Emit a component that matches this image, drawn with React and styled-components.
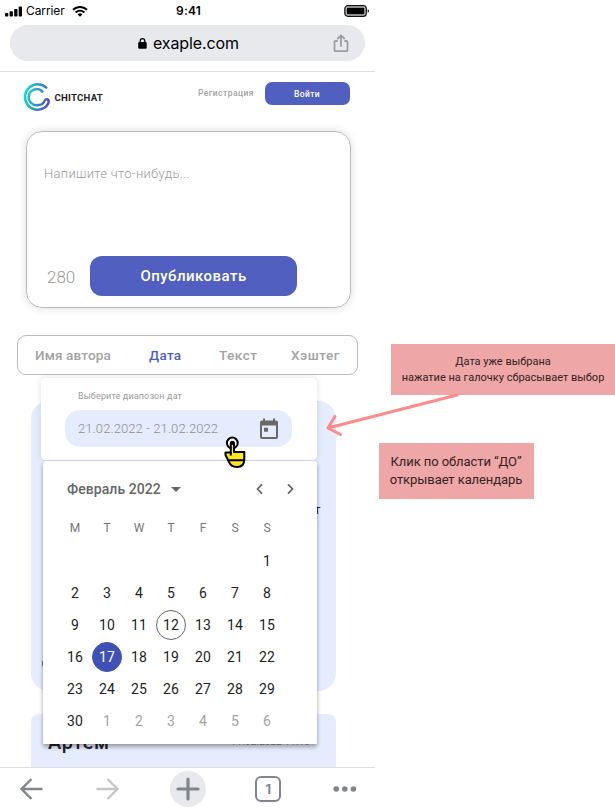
import React from 'react';
import styled, { createGlobalStyle } from 'styled-components';

const Global = createGlobalStyle`
  * { box-sizing: border-box; }
  body { margin: 0; background: #fff; font-family: Roboto, "Noto Sans", sans-serif; }
  button { border: 0; padding: 0; font: inherit; background: none; }
`;

const Page = styled.div`
  position: relative;
  width: 615px;
  height: 812px;
  display: flex;
  align-items: flex-start;
  overflow: hidden;
`;
const Phone = styled.main`
  width: 375px;
  height: 812px;
  flex: none;
  display: flex;
  flex-direction: column;
  overflow: hidden;
`;
const StatusBar = styled.div`
  height: 25px;
  padding: 0 5px 3px;
  display: grid;
  grid-template-columns: 1fr auto 1fr;
  align-items: center;
  color: #000;
`;
const StatusLeft = styled.div`
  display: flex;
  align-items: center;
  svg:last-child { margin-left: 7px; }
`;
const Carrier = styled.span`
  margin-left: 4px;
  font: 400 12px/20px Inter, sans-serif;
  letter-spacing: -0.1px;
`;
const Time = styled.span`
  margin-left: 2px;
  font: 600 12px/20px Inter, sans-serif;
  letter-spacing: 0.2px;
`;
const Battery = styled.svg`
  justify-self: end;
`;
const AddressBar = styled.div`
  position: relative;
  height: 36px;
  margin: 0 10px;
  border-radius: 18px;
  background: #e8e9ed;
  display: flex;
  align-items: center;
  justify-content: center;
  gap: 6px;
  padding-left: 2px;
  font: 400 16px/36px Inter, sans-serif;
  letter-spacing: -0.1px;
  color: #000;
`;
const ShareIcon = styled.svg`
  position: absolute;
  right: 16px;
  top: 9px;
`;
const Header = styled.header`
  height: 60px;
  margin-top: 10px;
  padding: 10px 25.5px 0 23px;
  border-top: 1px solid #dfe0e3;
  display: flex;
  align-items: flex-start;
`;
const Brand = styled.div`
  display: flex;
  align-items: center;
  gap: 3.5px;
  height: 30px;
  font-weight: 700;
  font-size: 9.6px;
  letter-spacing: 0.25px;
  color: #232323;
`;
const SignUp = styled.a`
  margin-left: auto;
  font-size: 8.5px;
  font-weight: 500;
  letter-spacing: 0.46px;
  line-height: 23px;
  color: #a3a3a3;
`;
const SignIn = styled.button`
  width: 85px;
  height: 23px;
  margin-left: 10.5px;
  border-radius: 7px;
  background: #505fc0;
  color: #fff;
  font-size: 8.5px;
  font-weight: 500;
  letter-spacing: 0.4px;
`;
const Composer = styled.section`
  flex: none;
  width: 325px;
  height: 177px;
  margin-left: 26px;
  padding: 32px 17px 11px;
  border: 1px solid #bcbcbc;
  border-radius: 16px;
  box-shadow: 0 0 10px rgba(0, 0, 0, 0.14);
  display: flex;
  flex-direction: column;
  justify-content: space-between;
`;
const Placeholder = styled.p`
  margin: 0;
  font-size: 13px;
  font-weight: 300;
  line-height: 20px;
  letter-spacing: 0.31px;
  color: #999;
`;
const ComposerFooter = styled.div`
  display: flex;
  align-items: center;
`;
const Counter = styled.span`
  width: 46px;
  padding: 2px 0 0 3px;
  font-size: 17px;
  font-weight: 300;
  color: #999;
`;
const Publish = styled.button`
  width: 207px;
  height: 40px;
  border-radius: 12px;
  background: #505fc0;
  color: #fff;
  font-size: 15px;
  font-weight: 500;
  letter-spacing: 0.47px;
`;
const Tabs = styled.nav`
  flex: none;
  width: 341px;
  height: 40px;
  margin: 27px 0 0 17px;
  padding: 0 17px;
  border: 1px solid #bcbcbc;
  border-radius: 9px;
  display: grid;
  grid-template-columns: 114px 70px 72px auto;
  align-items: center;
`;
const Tab = styled.span`
  font-size: 13.5px;
  font-weight: 500;
  letter-spacing: ${p => p.$spacing}px;
  color: ${p => (p.$active ? '#505fc0' : '#a3a3a3')};
`;
const Feed = styled.section`
  position: relative;
  flex: 1;
  min-height: 0;
  padding: 26px 39px 0 31px;
  display: flex;
  flex-direction: column;
  gap: 23px;
`;
const Post = styled.article`
  flex: none;
  height: ${p => p.$height}px;
  padding: ${p => p.$padding};
  border-radius: ${p => p.$radius};
  background: #e5ecfd;
  overflow: hidden;
  display: flex;
  justify-content: space-between;
`;
const PostText = styled.p`
  margin: 0 0 0 auto;
  font-size: 13.5px;
  line-height: 20px;
  color: #232323;
`;
const PostAction = styled.svg`
  align-self: flex-end;
`;
const Author = styled.strong`
  font-size: 20px;
  font-weight: 500;
  line-height: 24px;
  letter-spacing: 0.6px;
  color: #232323;
`;
const PostDate = styled.span`
  font-size: 10px;
  line-height: 24px;
  letter-spacing: 0.1px;
  color: #8b8f99;
`;
const RangePanel = styled.div`
  position: absolute;
  z-index: 1;
  left: 40.5px;
  top: 3px;
  width: 276.5px;
  height: 82px;
  padding: 12px 24.5px;
  border-radius: 5px;
  background: #fff;
  box-shadow: 0 0 6px rgba(0, 0, 0, 0.13);
`;
const RangeLabel = styled.div`
  margin: 0 0 7px 13px;
  font-size: 9px;
  line-height: 13px;
  letter-spacing: 0.14px;
  color: #9a9a9a;
`;
const RangeField = styled.div`
  height: 37px;
  width: 227px;
  padding: 0 13px;
  border-radius: 15px;
  background: #e5ecfd;
  display: flex;
  align-items: center;
  justify-content: space-between;
  font-size: 13px;
  font-weight: 300;
  letter-spacing: 0.1px;
  color: #8f8f94;
`;
const Calendar = styled.div`
  position: absolute;
  z-index: 2;
  left: 43px;
  top: 86px;
  width: 274px;
  height: 283px;
  padding: 12px 34px 0 16px;
  border-radius: 3px 3px 0 0;
  background: #fff;
  box-shadow: 0 3px 4px rgba(0, 0, 0, 0.32), 0 0 3px rgba(0, 0, 0, 0.1);
`;
const MonthBar = styled.div`
  height: 32px;
  padding-left: 8px;
  margin-right: -14px;
  display: flex;
  align-items: center;
  font-size: 14px;
  font-weight: 500;
  letter-spacing: 0.06px;
  color: #666;
  svg:nth-of-type(1) { margin-left: 10px; }
  svg:nth-of-type(2) { margin-left: auto; margin-right: 22px; }
  svg:nth-of-type(3) { margin-right: 3px; }
`;
const WeekRow = styled.div`
  display: grid;
  grid-template-columns: repeat(7, 32px);
  height: 32px;
  margin: 7px 0 1px;
  align-items: center;
  justify-items: center;
  font-size: 12px;
  color: #777;
`;
const DayGrid = styled.div`
  display: grid;
  grid-template-columns: repeat(7, 32px);
  grid-auto-rows: 32px;
  place-items: center;
`;
const Day = styled.span`
  width: 30px;
  height: 30px;
  display: grid;
  place-items: center;
  border-radius: 50%;
  border: 1px solid ${p => (p.$kind === 'today' ? '#666' : p.$kind === 'selected' ? '#3f51b5' : 'transparent')};
  background: ${p => (p.$kind === 'selected' ? '#3f51b5' : 'transparent')};
  color: ${p => ({ selected: '#fff', outside: '#a3a3a3' }[p.$kind] || '#232323')};
  font-size: 14px;
  letter-spacing: 0.2px;
  &:first-child { grid-column-start: 7; }
`;
const BottomBar = styled.footer`
  flex: none;
  height: 45px;
  padding: 0 17px 2px 18px;
  border-top: 1px solid #dfe0e3;
  background: #fff;
  display: flex;
  align-items: center;
  justify-content: space-between;
`;
const NavItem = styled.span`
  width: 26px;
  height: 36px;
  display: grid;
  place-items: center;
`;
const NewTab = styled.span`
  width: 36px;
  height: 36px;
  border-radius: 50%;
  background: #e8e9ed;
  display: grid;
  place-items: center;
`;
const TabCount = styled.span`
  width: 26px;
  height: 26px;
  margin-right: 1px;
  border: 2.6px solid #80868b;
  border-radius: 6px;
  display: grid;
  place-items: center;
  font: 700 13px/1 Inter, sans-serif;
  color: #80868b;
`;
const Notes = styled.aside`
  width: 240px;
  padding-top: 344px;
  display: flex;
  flex-direction: column;
  align-items: flex-start;
  gap: 48px;
`;
const Note = styled.div`
  width: ${p => p.$width}px;
  height: ${p => p.$height}px;
  margin-left: ${p => p.$left}px;
  padding-right: ${p => p.$inset}px;
  display: flex;
  flex-direction: column;
  align-items: center;
  justify-content: center;
  background: #eea6a6;
  color: #322424;
  font-size: ${p => p.$size}px;
  line-height: ${p => p.$line}px;
  letter-spacing: ${p => p.$spacing}px;
  white-space: nowrap;
`;
const Overlay = styled.svg`
  position: absolute;
  z-index: 3;
  left: ${p => p.$left}px;
  top: ${p => p.$top}px;
`;

const Logo = () => (
  <svg width="28" height="30" viewBox="0 0 28 30" fill="none" stroke="url(#brand)" strokeWidth="2.5" strokeLinecap="round">
    <defs>
      <linearGradient id="brand" x1="1" y1="12" x2="26" y2="19" gradientUnits="userSpaceOnUse">
        <stop stopColor="#0be0cc" />
        <stop offset="1" stopColor="#4d50c0" />
      </linearGradient>
    </defs>
    <path d="M23.2 5.6A12.7 12.7 0 1 0 21.4 25.8C24.4 23.5 25.7 20.8 25.7 19.2C25.7 16.6 22.1 16.4 21.4 19C20.6 21.6 18 23 15.2 23A8 8 0 1 1 19.3 9.5" />
  </svg>
);

const days = [...Array.from({ length: 30 }, (_, i) => i + 1), 1, 2, 3, 4, 5, 6];
const kindOf = (d, i) => (i >= 30 ? 'outside' : d === 12 ? 'today' : d === 17 ? 'selected' : 'plain');

export default function App() {
  return (
    <Page>
      <Global />
      <Phone>
        <StatusBar>
          <StatusLeft>
            <svg width="17" height="11" viewBox="0 0 17 11">
              <rect x="0" y="7" width="3.3" height="3.6" rx=".8" />
              <rect x="4.6" y="5.3" width="3.3" height="5.3" rx=".8" />
              <rect x="9.2" y="3" width="3.3" height="7.6" rx=".8" />
              <rect x="13.7" y="0.6" width="3.3" height="10" rx=".8" />
            </svg>
            <Carrier>Carrier</Carrier>
            <svg width="16" height="11" viewBox="0 0 16 11" fill="none" stroke="#000" strokeWidth="1.9">
              <path d="M1 3.8A10 10 0 0 1 15 3.8M3.6 6.5A6.2 6.2 0 0 1 12.4 6.5" />
              <path d="M8 10.8L5.6 8.4A3.4 3.4 0 0 1 10.4 8.4Z" fill="#000" stroke="none" />
            </svg>
          </StatusLeft>
          <Time>9:41</Time>
          <Battery width="26" height="12" viewBox="0 0 26 12">
            <rect x=".8" y=".7" width="21.5" height="10.6" rx="3" fill="#bbb" stroke="#111" strokeWidth="1.2" />
            <rect x="2.8" y="2.7" width="17.5" height="6.6" rx="1.2" />
            <path d="M23.7 4.2C25.4 4.8 25.4 7.2 23.7 7.8Z" />
          </Battery>
        </StatusBar>
        <AddressBar>
          <svg width="9" height="11" viewBox="0 0 9 11">
            <rect x="0.2" y="4.1" width="8.5" height="6.6" rx="1.2" />
            <path d="M2.2 5V3A2.3 2.3 0 0 1 6.8 3V5" fill="none" stroke="#000" strokeWidth="1.3" />
          </svg>
          exaple.com
          <ShareIcon width="16" height="19" viewBox="0 0 16 19" fill="none" stroke="#9b9da2" strokeWidth="1.8" strokeLinecap="round" strokeLinejoin="round">
            <path d="M4 7H2.5Q1.5 7 1.5 8V16.2Q1.5 17.2 2.5 17.2H13.5Q14.5 17.2 14.5 16.2V8Q14.5 7 13.5 7H12M8 12V1.5M4.8 4.5L8 1.3L11.2 4.5" />
          </ShareIcon>
        </AddressBar>
        <Header>
          <Brand>
            <Logo />
            CHITCHAT
          </Brand>
          <SignUp>Регистрация</SignUp>
          <SignIn>Войти</SignIn>
        </Header>
        <Composer>
          <Placeholder>Напишите что-нибудь...</Placeholder>
          <ComposerFooter>
            <Counter>280</Counter>
            <Publish>Опубликовать</Publish>
          </ComposerFooter>
        </Composer>
        <Tabs>
          <Tab $spacing={0.15}>Имя автора</Tab>
          <Tab $spacing={0.3} $active>Дата</Tab>
          <Tab $spacing={0.5}>Текст</Tab>
          <Tab $spacing={0.5}>Хэштег</Tab>
        </Tabs>
        <Feed>
          <Post $height={290} $radius="18px" $padding="98px 15.5px 21px 11px">
            <PostAction width="10" height="12" viewBox="0 0 10 12" fill="none" stroke="#777" strokeWidth="1.3">
              <circle cx="5" cy="5.5" r="4.5" />
            </PostAction>
            <PostText>т</PostText>
          </Post>
          <Post $height={53} $radius="8px 8px 0 0" $padding="16px 26px 0 17px">
            <Author>Артем</Author>
            <PostDate>11.02.2022 11:10</PostDate>
          </Post>
          <RangePanel>
            <RangeLabel>Выберите диапозон дат</RangeLabel>
            <RangeField>
              21.02.2022 - 21.02.2022
              <svg width="20" height="21" viewBox="0 0 20 21">
                <path fill="#6b6868" fillRule="evenodd" d="M4 0.5H6V2.5H14V0.5H16V2.5H17A2 2 0 0 1 19 4.5V19A2 2 0 0 1 17 21H3A2 2 0 0 1 1 19V4.5A2 2 0 0 1 3 2.5H4ZM3 7.5V19H17V7.5ZM5 9.8H9V13.8H5Z" />
              </svg>
            </RangeField>
          </RangePanel>
          <Calendar>
            <MonthBar>
              Февраль 2022
              <svg width="10" height="5" viewBox="0 0 10 5"><path d="M0 0H10L5 5Z" fill="#666" /></svg>
              <svg width="8" height="10" viewBox="0 0 8 10" fill="none" stroke="#666" strokeWidth="1.7"><path d="M6 .3L1.5 5L6 9.7" /></svg>
              <svg width="8" height="10" viewBox="0 0 8 10" fill="none" stroke="#666" strokeWidth="1.7"><path d="M2 .3L6.5 5L2 9.7" /></svg>
            </MonthBar>
            <WeekRow>
              {['M', 'T', 'W', 'T', 'F', 'S', 'S'].map((d, i) => <span key={i}>{d}</span>)}
            </WeekRow>
            <DayGrid>
              {days.map((d, i) => <Day key={i} $kind={kindOf(d, i)}>{d}</Day>)}
            </DayGrid>
          </Calendar>
        </Feed>
        <BottomBar>
          <NavItem>
            <svg width="24" height="22" viewBox="0 0 24 22" fill="none" stroke="#80868b" strokeWidth="2.4"><path d="M23.5 11H2.5M12.5 1L2.5 11L12.5 21" /></svg>
          </NavItem>
          <NavItem>
            <svg width="24" height="22" viewBox="0 0 24 22" fill="none" stroke="#c6c7c9" strokeWidth="2.4"><path d="M1.5 11H22.5M12.5 1L22.5 11L12.5 21" /></svg>
          </NavItem>
          <NewTab>
            <svg width="24" height="24" viewBox="0 0 24 24" stroke="#80868b" strokeWidth="3.2" strokeLinecap="round"><path d="M12 2V22M2 12H22" /></svg>
          </NewTab>
          <TabCount>1</TabCount>
          <NavItem>
            <svg width="24" height="6" viewBox="0 0 24 6" fill="#80868b"><circle cx="3.2" cy="3" r="2.8" /><circle cx="11.8" cy="3" r="2.8" /><circle cx="20.4" cy="3" r="2.8" /></svg>
          </NavItem>
        </BottomBar>
      </Phone>
      <Notes>
        <Note $width={225} $height={51} $left={16} $size={11} $line={16} $spacing={0} $inset={1}>
          <span>Дата уже выбрана</span>
          <span>нажатие на галочку сбрасывает выбор</span>
        </Note>
        <Note $width={155} $height={56} $left={4} $size={13} $line={18} $spacing={-0.08} $inset={1}>
          <span>Клик по области “ДО”</span>
          <span>открывает календарь</span>
        </Note>
      </Notes>
      <Overlay $left={320} $top={390} width="140" height="50" viewBox="0 0 140 50" fill="none" stroke="#ff8a8a" strokeWidth="3" strokeLinejoin="round">
        <path d="M137 5L8 38M15 26.5L8 38L20.5 44.5" strokeLinecap="round" />
      </Overlay>
      <Overlay $left={222} $top={435} width="26" height="34" viewBox="0 0 26 34" fill="none" stroke="#000" strokeWidth="2">
        <circle cx="10.3" cy="8" r="5.4" fill="#fff" />
        <path d="M8.8 8.5Q8.8 6.8 10.4 6.8Q12 6.8 12 8.5V17H22.3V24.5Q22.3 32 15 32Q8.5 32 6.8 26.5L3.5 20V17.5H8.8Z" fill="#ffe526" strokeLinejoin="round" />
        <path d="M6.8 25.3H22.3M8.8 17.5V20.5" />
        <circle cx="10.3" cy="8" r="2" fill="#000" stroke="none" />
      </Overlay>
    </Page>
  );
}
